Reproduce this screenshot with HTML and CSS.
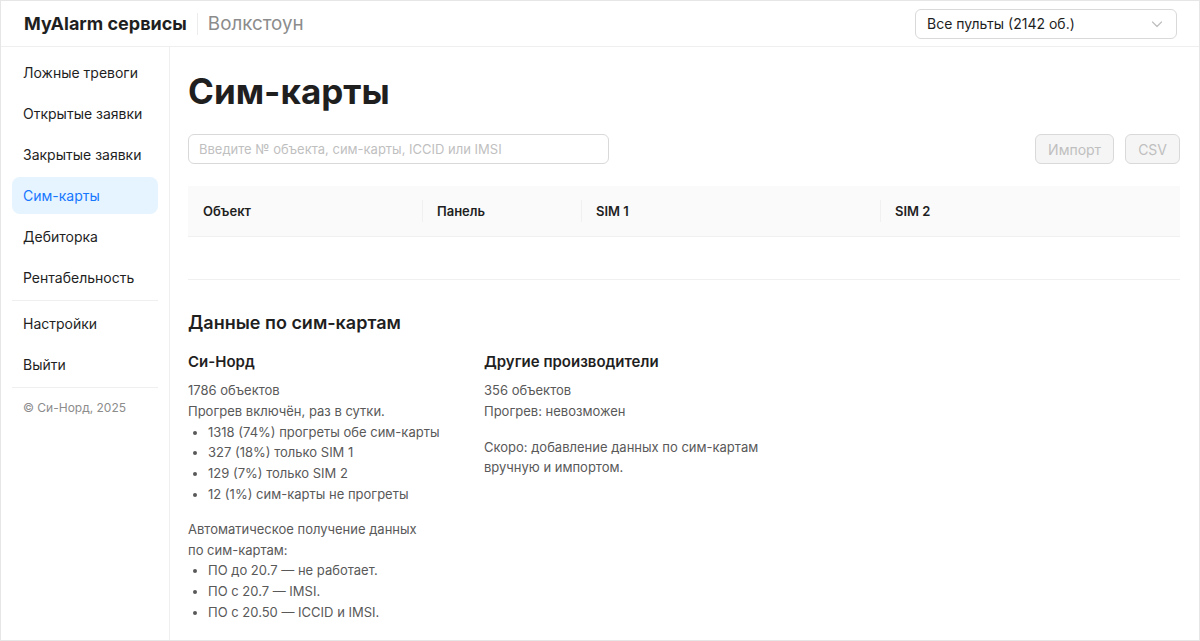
FILE: index.html
```html
<!DOCTYPE html>
<html lang="ru">
<head>
	<meta charset="UTF-8">
	<title>Сим-карты — MyAlarm сервисы</title>
	<link rel="stylesheet" href="styles.css">
</head>
<body>
	<div class="app">
		<header class="topbar">
			<div class="brand">
				<span class="brand-name">MyAlarm сервисы</span>
				<span class="brand-org">Волкстоун</span>
			</div>
			<div class="select">
				<span>Все пульты (2142 об.)</span>
				<svg class="select-arrow" width="12" height="12" viewBox="0 0 12 12"><path d="M1.5 4l4.5 4.5L10.5 4" fill="none" stroke="#bfbfbf" stroke-width="1.2" stroke-linecap="round" stroke-linejoin="round"/></svg>
			</div>
		</header>

		<div class="layout">
			<nav class="sidebar">
				<a class="nav-item">Ложные тревоги</a>
				<a class="nav-item">Открытые заявки</a>
				<a class="nav-item">Закрытые заявки</a>
				<a class="nav-item active">Сим-карты</a>
				<a class="nav-item">Дебиторка</a>
				<a class="nav-item">Рентабельность</a>
				<div class="nav-divider"></div>
				<a class="nav-item">Настройки</a>
				<a class="nav-item">Выйти</a>
				<div class="nav-divider"></div>
				<div class="copyright">© Си-Норд, 2025</div>
			</nav>

			<main class="content">
				<h1 class="page-title">Сим-карты</h1>

				<div class="toolbar">
					<input class="search" type="text" placeholder="Введите № объекта, сим-карты, ICCID или IMSI">
					<div class="actions">
						<button class="btn" disabled>Импорт</button>
						<button class="btn" disabled>CSV</button>
					</div>
				</div>

				<div class="table">
					<div class="table-head">
						<div class="th col-object">Объект</div>
						<div class="th col-panel">Панель</div>
						<div class="th col-sim1">SIM 1</div>
						<div class="th col-sim2">SIM 2</div>
					</div>
					<div class="table-empty"></div>
				</div>

				<h2 class="section-title">Данные по сим-картам</h2>

				<div class="stats">
					<div class="stats-col">
						<h3 class="stats-title">Си-Норд</h3>
						<p>1786 объектов<br>Прогрев включён, раз в сутки.</p>
						<ul>
							<li>1318 (74%) прогреты обе сим-карты</li>
							<li>327 (18%) только SIM 1</li>
							<li>129 (7%) только SIM 2</li>
							<li>12 (1%) сим-карты не прогреты</li>
						</ul>
						<p>Автоматическое получение данных<br>по сим-картам:</p>
						<ul>
							<li>ПО до 20.7 — не работает.</li>
							<li>ПО с 20.7 — IMSI.</li>
							<li>ПО с 20.50 — ICCID и IMSI.</li>
						</ul>
					</div>
					<div class="stats-col other">
						<h3 class="stats-title">Другие производители</h3>
						<p>356 объектов<br>Прогрев: невозможен</p>
						<p>Скоро: добавление данных по сим-картам вручную и импортом.</p>
					</div>
				</div>
			</main>
		</div>
	</div>
</body>
</html>
```

FILE: styles.css
```css
*{margin:0;padding:0;box-sizing:border-box}
body{
	font-family: Inter, "Noto Sans", "Liberation Sans", sans-serif;
	color:#1f1f1f;
	background:#fff;
}
.app{
	width:1200px;
	height:641px;
	border:1px solid #e6e6e6;
	display:flex;
	flex-direction:column;
	overflow:hidden;
}

/* верхняя панель */
.topbar{
	height:46px;
	flex-shrink:0;
	border-bottom:1px solid #efefef;
	display:flex;
	align-items:center;
	justify-content:space-between;
	padding:0 22px 0 23px;
}
.brand{
	display:flex;
	align-items:center;
}
.brand-name{
	font-size:18px;
	font-weight:700;
	padding-right:10px;
	border-right:1px solid #ececec;
	line-height:22px;
}
.brand-org{
	font-size:18.8px;
	color:#8c8c8c;
	padding-left:10px;
	line-height:22px;
}
.select{
	width:262px;
	height:30px;
	border:1px solid #d9d9d9;
	border-radius:6px;
	display:flex;
	align-items:center;
	justify-content:space-between;
	padding:0 13px 0 11px;
	font-size:14px;
}

.layout{
	flex:1;
	display:flex;
	min-height:0;
}

/* меню слева */
.sidebar{
	width:169px;
	flex-shrink:0;
	border-right:1px solid #efefef;
	padding:7px 11px 0 11px;
	display:flex;
	flex-direction:column;
	gap:4px;
}
.nav-item{
	height:37px;
	line-height:37px;
	padding-left:11px;
	border-radius:8px;
	font-size:14px;
	color:#1f1f1f;
	cursor:pointer;
}
.nav-item.active{
	background:#e6f4ff;
	color:#1677ff;
}
.nav-divider{
	height:1px;
	background:#efefef;
}
.copyright{
	font-size:12px;
	color:#8c8c8c;
	padding:6px 0 0 11px;
	line-height:20px;
}

/* основная часть */
.content{
	flex:1;
	padding:24px 19px 0 18px;
	overflow:hidden;
}
.page-title{
	font-size:35px;
	font-weight:700;
	line-height:40px;
}
.toolbar{
	margin-top:23px;
	display:flex;
	justify-content:space-between;
	align-items:center;
}
.search{
	width:421px;
	height:30px;
	border:1px solid #d9d9d9;
	border-radius:6px;
	padding:0 10px;
	font-family:inherit;
	font-size:13px;
	outline:none;
}
.search::placeholder{color:#bfbfbf}
.actions{
	display:flex;
	gap:11px;
}
.btn{
	height:30px;
	padding:0 12px;
	border:1px solid #d9d9d9;
	border-radius:6px;
	background:#f5f5f5;
	color:#bfbfbf;
	font-family:inherit;
	font-size:14px;
}

/* таблица */
.table{margin-top:22px}
.table-head{
	display:flex;
	height:51px;
	background:#fafafa;
	border-bottom:1px solid #f0f0f0;
}
.th{
	position:relative;
	display:flex;
	align-items:center;
	padding-left:15px;
	font-size:13px;
	font-weight:600;
}
.th + .th::before{
	content:"";
	position:absolute;
	left:0;
	top:50%;
	height:22px;
	width:1px;
	margin-top:-11px;
	background:#f0f0f0;
}
.col-object{width:234px}
.col-panel{width:159px}
.col-sim1{width:299px}
.col-sim2{flex:1}
.table-empty{
	height:43px;
	border-bottom:1px solid #f0f0f0;
}

/* данные по сим-картам */
.section-title{
	margin-top:31px;
	font-size:18px;
	font-weight:600;
	line-height:24px;
}
.stats{
	margin-top:16px;
	display:grid;
	grid-template-columns:256px 300px;
	column-gap:40px;
}
.stats-title{
	font-size:15px;
	font-weight:600;
	line-height:22px;
	margin-bottom:7px;
}
.stats-col p,
.stats-col li{
	font-size:13px;
	line-height:20.8px;
	color:#595959;
}
.stats-col ul{
	padding-left:20px;
	margin-bottom:14px;
}
.stats-col.other p + p{margin-top:15px}
```
